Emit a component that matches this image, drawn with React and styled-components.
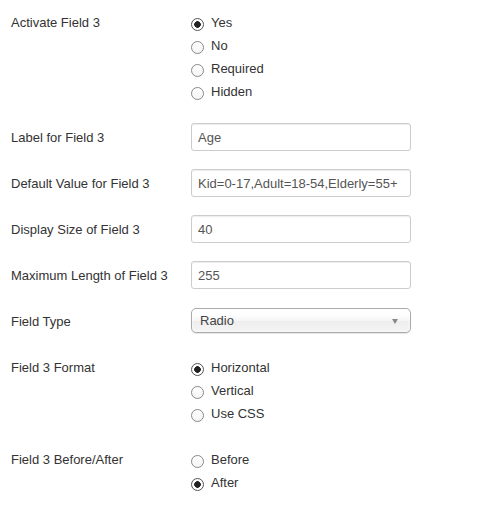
import React from 'react';
import styled, { createGlobalStyle } from 'styled-components';

const GlobalStyle = createGlobalStyle`
  html, body {
    margin: 0;
    padding: 0;
    background: #fff;
  }
  body {
    font-family: "Liberation Sans", Arial, sans-serif;
    font-size: 13px;
    color: #333;
  }
`;

const Form = styled.form`
  padding: 8px 11px 0 11px;
`;

const ControlGroup = styled.div`
  display: flex;
  align-items: flex-start;
  margin-bottom: 18px;
`;

const ControlLabel = styled.label`
  flex: 0 0 180px;
  padding-top: 6px;
  line-height: 18px;
  color: #333;
`;

const Controls = styled.div`
  flex: 0 0 220px;
`;

const RadioList = styled.fieldset`
  margin: 0;
  padding: 6px 0 0 0;
  border: 0;
  display: flex;
  flex-direction: column;
`;

const RadioOption = styled.label`
  display: flex;
  align-items: flex-start;
  height: 18px;
  line-height: 18px;
  margin-bottom: 5px;
  color: #333;

  &:last-child {
    margin-bottom: 4px;
  }
`;

const Radio = styled.input.attrs({ type: 'radio' })`
  appearance: none;
  -webkit-appearance: none;
  box-sizing: border-box;
  width: 13px;
  height: 13px;
  margin: 4px 7px 0 0;
  border: 1px solid ${(p) => (p.checked ? '#555' : '#888')};
  border-radius: 50%;
  background: ${(p) =>
    p.checked
      ? 'radial-gradient(circle, #222 0, #222 3px, #fff 3.6px)'
      : 'linear-gradient(#fff, #f4f4f4)'};
  flex: none;
`;

const TextInput = styled.input.attrs({ type: 'text' })`
  box-sizing: border-box;
  display: block;
  width: 220px;
  height: 28px;
  padding: 4px 6px;
  border: 1px solid #ccc;
  border-radius: 3px;
  box-shadow: inset 0 1px 1px rgba(0, 0, 0, 0.075);
  font-family: "Liberation Sans", Arial, sans-serif;
  font-size: 13px;
  color: #555;
  outline: none;
`;

const SelectWrap = styled.div`
  position: relative;
  height: 27px;
`;

const Select = styled.select`
  appearance: none;
  -webkit-appearance: none;
  box-sizing: border-box;
  display: block;
  width: 220px;
  height: 25px;
  margin-top: 1px;
  padding: 0 20px 0 8px;
  border: 1px solid #aaa;
  border-radius: 5px;
  background: linear-gradient(#ffffff 20%, #f6f6f6 50%, #eeeeee 52%, #f4f4f4 100%);
  box-shadow: 0 0 3px #fff inset, 0 1px 1px rgba(0, 0, 0, 0.1);
  font-family: "Liberation Sans", Arial, sans-serif;
  font-size: 13px;
  color: #444;
  outline: none;
`;

const Caret = styled.span`
  position: absolute;
  top: 11px;
  right: 13px;
  width: 0;
  height: 0;
  border-left: 3px solid transparent;
  border-right: 3px solid transparent;
  border-top: 5px solid #888;
  pointer-events: none;
`;

function RadioGroup({ name, options, value }) {
  return (
    <RadioList>
      {options.map((opt) => (
        <RadioOption key={opt}>
          <Radio name={name} checked={opt === value} readOnly />
          {opt}
        </RadioOption>
      ))}
    </RadioList>
  );
}

const textFields = [
  { label: 'Label for Field 3', value: 'Age' },
  { label: 'Default Value for Field 3', value: 'Kid=0-17,Adult=18-54,Elderly=55+' },
  { label: 'Display Size of Field 3', value: '40' },
  { label: 'Maximum Length of Field 3', value: '255' },
];

export default function App() {
  return (
    <>
      <GlobalStyle />
      <Form>
        <ControlGroup>
          <ControlLabel>Activate Field 3</ControlLabel>
          <Controls>
            <RadioGroup name="activate" options={['Yes', 'No', 'Required', 'Hidden']} value="Yes" />
          </Controls>
        </ControlGroup>

        {textFields.map((f) => (
          <ControlGroup key={f.label}>
            <ControlLabel>{f.label}</ControlLabel>
            <Controls>
              <TextInput defaultValue={f.value} />
            </Controls>
          </ControlGroup>
        ))}

        <ControlGroup>
          <ControlLabel>Field Type</ControlLabel>
          <Controls>
            <SelectWrap>
              <Select defaultValue="radio">
                <option value="text">Text</option>
                <option value="radio">Radio</option>
                <option value="select">Select</option>
              </Select>
              <Caret />
            </SelectWrap>
          </Controls>
        </ControlGroup>

        <ControlGroup>
          <ControlLabel>Field 3 Format</ControlLabel>
          <Controls>
            <RadioGroup name="format" options={['Horizontal', 'Vertical', 'Use CSS']} value="Horizontal" />
          </Controls>
        </ControlGroup>

        <ControlGroup>
          <ControlLabel>Field 3 Before/After</ControlLabel>
          <Controls>
            <RadioGroup name="position" options={['Before', 'After']} value="After" />
          </Controls>
        </ControlGroup>
      </Form>
    </>
  );
}
